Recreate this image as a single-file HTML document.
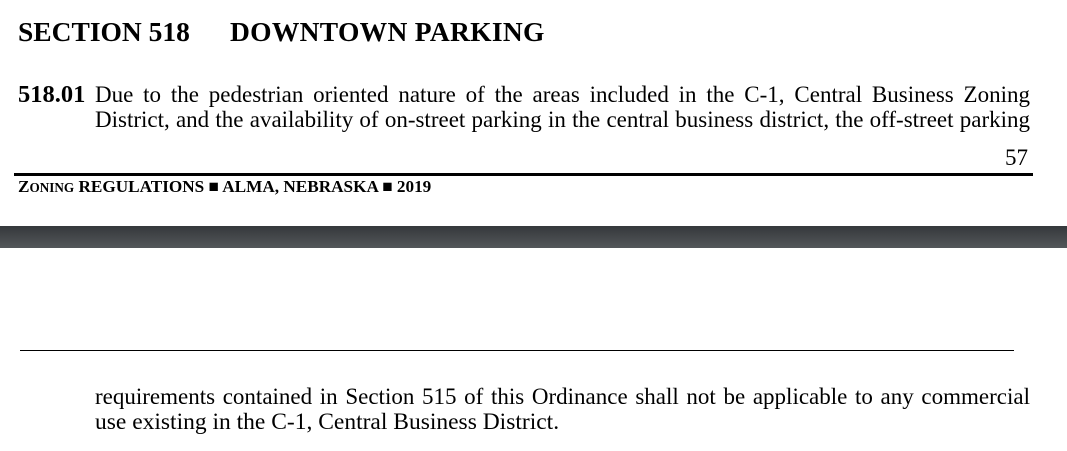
<!DOCTYPE html>
<html><head><meta charset="utf-8"><style>
body{margin:0;width:1067px;height:451px;background:#fff;position:relative;overflow:hidden;font-family:"Liberation Serif",serif;color:#000}
.a{position:absolute;white-space:nowrap;line-height:1}
.j{text-align:justify;text-align-last:justify;white-space:normal}
</style></head><body>
<div class="a" style="left:18px;top:18px;font-size:27.5px;font-weight:bold">SECTION 518</div>
<div class="a" style="left:230px;top:18px;font-size:27.5px;font-weight:bold;letter-spacing:0.3px">DOWNTOWN PARKING</div>
<div class="a" style="left:18px;top:83px;font-size:24.5px;font-weight:bold">518.01</div>
<div class="a j" style="left:95px;top:83px;width:935px;font-size:23px">Due to the pedestrian oriented nature of the areas included in the C-1, Central Business Zoning</div>
<div class="a j" style="left:95px;top:108px;width:935px;font-size:23px">District, and the availability of on-street parking in the central business district, the off-street parking</div>
<div class="a" style="left:1005px;top:146px;font-size:23px">57</div>
<div class="a" style="left:14px;top:173px;width:1019px;height:3px;background:#000"></div>
<div class="a" style="left:18px;top:178px;font-size:17.2px;font-weight:bold">Z<span style="font-size:13.2px">ONING</span> REGULATIONS ■ ALMA, NEBRASKA ■ 2019</div>
<div class="a" style="left:0;top:226px;width:1067px;height:22px;background:linear-gradient(#35383b,#53575a)"></div>
<div class="a" style="left:20px;top:350px;width:994px;height:1px;background:#000"></div>
<div class="a j" style="left:95px;top:385px;width:935px;font-size:23px">requirements contained in Section 515 of this Ordinance shall not be applicable to any commercial</div>
<div class="a" style="left:95px;top:411px;font-size:23.5px">use existing in the C-1, Central Business District.</div>
</body></html>
